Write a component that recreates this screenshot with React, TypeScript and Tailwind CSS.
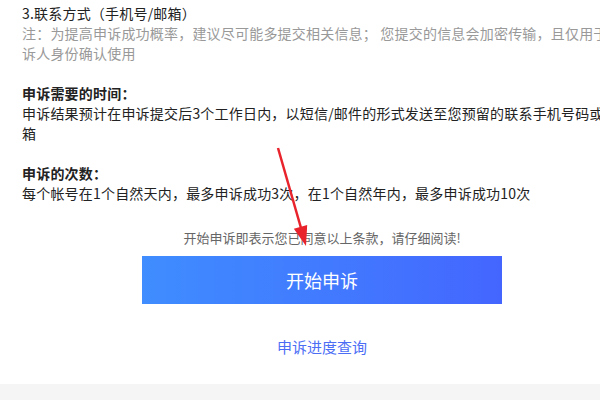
export default function App() {
  return (
    <div className="relative w-[600px] h-[400px] overflow-hidden bg-white font-['Noto_Sans_CJK_SC',sans-serif]">
      <div className="w-[644px] flex flex-col">
        {/* 条款说明 */}
        <div className="px-[22px] pt-[3px] text-[14px] leading-[20px] tracking-[0.2px] text-[#222]">
          <p>3.联系方式（手机号/邮箱）</p>
          <p className="text-[#999]">
            注：为提高申诉成功概率，建议尽可能多提交相关信息； 您提交的信息会加密传输，且仅用于投诉人身份确认使用
          </p>

          <p className="mt-[20px] font-bold">申诉需要的时间：</p>
          <p>申诉结果预计在申诉提交后3个工作日内，以短信/邮件的形式发送至您预留的联系手机号码或邮箱</p>

          <p className="mt-[20px] font-bold">申诉的次数：</p>
          <p>每个帐号在1个自然天内，最多申诉成功3次，在1个自然年内，最多申诉成功10次</p>
        </div>

        {/* 操作区 */}
        <div className="flex flex-col items-center mt-[25px]">
          <p className="text-[13px] leading-[20px] text-[#666]">开始申诉即表示您已同意以上条款，请仔细阅读!</p>
          <button className="mt-[8px] w-[360px] h-[48px] bg-gradient-to-r from-[#3f8dff] to-[#4466ff] text-white text-[18px]">
            开始申诉
          </button>
          <a className="mt-[33px] mb-[27px] text-[15px] leading-[20px] text-[#4c6ef5] cursor-pointer">申诉进度查询</a>
        </div>

        <div className="h-[20px] bg-[#f5f5f5]" />
      </div>

      {/* 标注箭头 */}
      <svg className="absolute left-0 top-0 pointer-events-none" width="600" height="400">
        <line x1="278" y1="148" x2="301" y2="228" stroke="#e8232b" strokeWidth="2.5" />
        <polygon points="306,246 307.2,224.9 293.8,228.7" fill="#e8232b" />
      </svg>
    </div>
  );
}
